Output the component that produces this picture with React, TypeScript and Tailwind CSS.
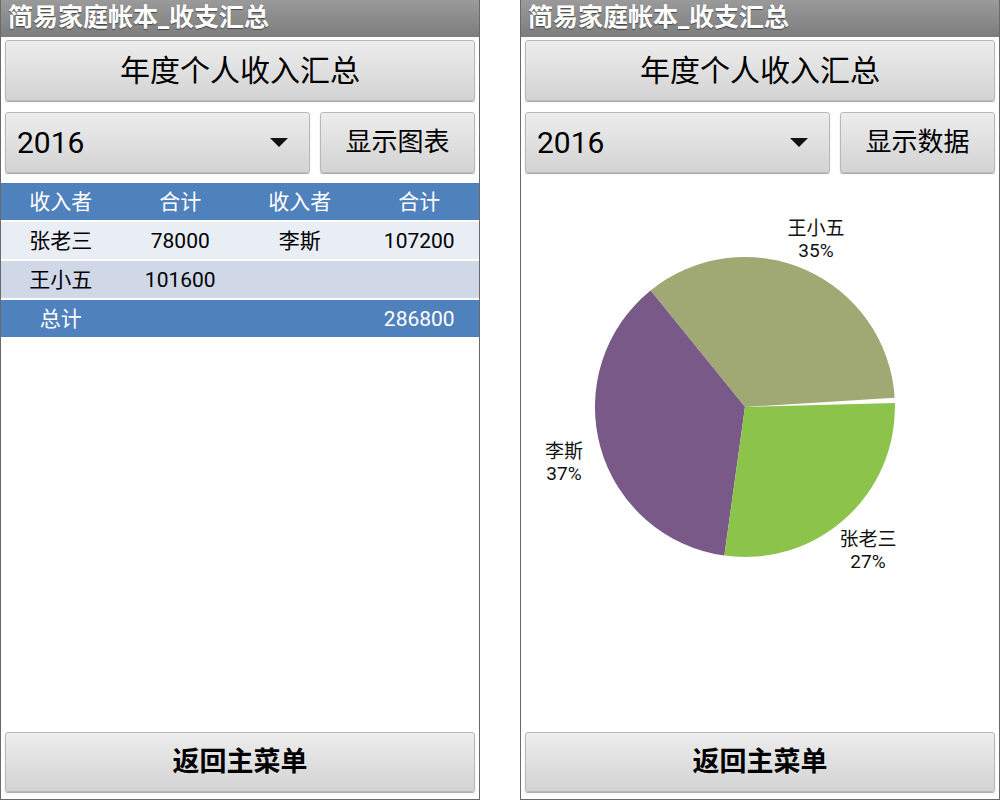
import React from 'react';

const rows = [
  ['张老三', '78000', '李斯', '107200'],
  ['王小五', '101600', '', ''],
];

const btn =
  'rounded-[3px] border border-[#b8b8b8] bg-gradient-to-b from-[#ededed] to-[#d3d3d3] shadow-[0_1px_1px_rgba(0,0,0,0.35)] text-black';

function Panel({ toggle, children }: { toggle: string; children: React.ReactNode }) {
  return (
    <div className="flex h-[800px] w-[480px] shrink-0 flex-col border-x border-b border-[#6a6a6a] bg-white font-['Roboto','Noto_Sans_CJK_SC',sans-serif]">
      <div className="h-[37px] bg-gradient-to-b from-[#9a9a9a] to-[#7d7d7d] pl-[7px] text-[25px] font-bold leading-[36px] text-white [text-shadow:0_1px_1px_rgba(0,0,0,0.5)]">
        简易家庭帐本_收支汇总
      </div>
      <div className="px-[4px]">
        <button className={`${btn} mt-[3px] h-[61px] w-full text-[30px]`}>年度个人收入汇总</button>
        <div className="mt-[11px] flex gap-[10px]">
          <div className={`${btn} flex h-[61px] w-[305px] items-center justify-between pl-[11px] pr-[21px] text-[30px]`}>
            <span>2016</span>
            <svg width="18" height="9" viewBox="0 0 18 9">
              <polygon points="0,0 18,0 9,9" fill="#111" />
            </svg>
          </div>
          <button className={`${btn} h-[61px] flex-1 text-[26px]`}>{toggle}</button>
        </div>
      </div>
      {children}
      <div className="mt-auto px-[4px] pb-[7px]">
        <button className={`${btn} h-[60px] w-full text-[27px] font-bold`}>返回主菜单</button>
      </div>
    </div>
  );
}

function Table() {
  return (
    <div className="mt-[10px] flex flex-col gap-[2px] text-[21px]">
      <div className="grid h-[37px] grid-cols-4 items-center bg-[#4f81bd] pt-[2px] text-center text-white">
        <span>收入者</span>
        <span>合计</span>
        <span>收入者</span>
        <span>合计</span>
      </div>
      {rows.map((r, i) => (
        <div
          key={i}
          className={`grid h-[37px] grid-cols-4 items-center pt-[2px] text-center text-black ${i === 0 ? 'bg-[#e9edf4]' : 'bg-[#d0d8e8]'}`}
        >
          {r.map((c, j) => (
            <span key={j}>{c}</span>
          ))}
        </div>
      ))}
      <div className="grid h-[37px] grid-cols-4 items-center bg-[#4f81bd] pt-[2px] text-center text-white">
        <span>总计</span>
        <span />
        <span />
        <span>286800</span>
      </div>
    </div>
  );
}

function Pie() {
  return (
    <div className="mt-[10px]">
      <svg width="478" height="410" viewBox="0 0 478 410">
        <path d="M224 224 L373.7 214.8 A150 150 0 0 0 129.6 107.4 Z" fill="#a0a873" />
        <path d="M224 224 L129.6 107.4 A150 150 0 0 0 203.4 372.6 Z" fill="#795988" />
        <path d="M224 224 L203.4 372.6 A150 150 0 0 0 373.9 220.1 Z" fill="#8bc34b" />
        <g fontSize="19" fill="#111" textAnchor="middle" fontFamily="Roboto, 'Noto Sans CJK SC', sans-serif">
          <text x="295" y="52">王小五</text>
          <text x="295" y="74">35%</text>
          <text x="43" y="275">李斯</text>
          <text x="43" y="297">37%</text>
          <text x="347" y="363">张老三</text>
          <text x="347" y="385">27%</text>
        </g>
      </svg>
    </div>
  );
}

export default function App() {
  return (
    <div className="flex h-[800px] w-[1000px] gap-[40px] overflow-hidden bg-white">
      <Panel toggle="显示图表">
        <Table />
      </Panel>
      <Panel toggle="显示数据">
        <Pie />
      </Panel>
    </div>
  );
}
